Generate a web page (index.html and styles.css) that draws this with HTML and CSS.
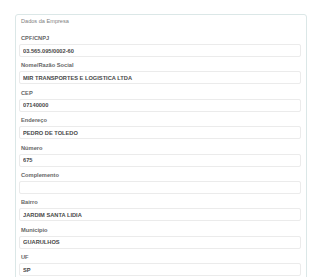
FILE: index.html
```html
<!DOCTYPE html>
<html lang="pt-BR">
<head>
<meta charset="utf-8">
<title>Dados da Empresa</title>
<link rel="stylesheet" href="styles.css">
</head>
<body>
<div class="page">
  <section class="card">
    <div class="card-title">Dados da Empresa</div>
    <div class="group"><label class="lbl">CPF/CNPJ</label><input class="field" value="03.565.095/0002-60" readonly></div>
    <div class="group"><label class="lbl">Nome/Razão Social</label><input class="field" value="MIR TRANSPORTES E LOGISTICA LTDA" readonly></div>
    <div class="group"><label class="lbl">CEP</label><input class="field" value="07140000" readonly></div>
    <div class="group"><label class="lbl">Endereço</label><input class="field" value="PEDRO DE TOLEDO" readonly></div>
    <div class="group"><label class="lbl">Número</label><input class="field" value="675" readonly></div>
    <div class="group"><label class="lbl">Complemento</label><input class="field" value="" readonly></div>
    <div class="group"><label class="lbl">Bairro</label><input class="field" value="JARDIM SANTA LIDIA" readonly></div>
    <div class="group"><label class="lbl">Município</label><input class="field" value="GUARULHOS" readonly></div>
    <div class="group"><label class="lbl">UF</label><input class="field" value="SP" readonly></div>
  </section>
</div>
</body>
</html>
```
FILE: styles.css
```css
html, body {
  margin: 0;
  padding: 0;
  background: #ffffff;
  font-family: "Liberation Sans", Arial, sans-serif;
}
.page {
  padding: 14px 13px 0 15px;
}
.card {
  border: 1px solid #dbe7e7;
  border-radius: 3px;
  padding: 2px 5px 10px 3px;
  background: #fff;
}
.card-title {
  font-size: 5.6px;
  line-height: 8px;
  color: #808080;
  padding-left: 2px;
  margin-bottom: 9px;
}
.group {
  display: flex;
  flex-direction: column;
  margin-bottom: 4.4px;
}
.lbl {
  font-size: 5.7px;
  line-height: 8px;
  font-weight: 700;
  color: #666;
  padding-left: 2px;
  margin-bottom: 2px;
}
.field {
  box-sizing: border-box;
  height: 13px;
  width: 100%;
  margin: 0;
  border: 1px solid #ebebeb;
  border-radius: 2px;
  padding: 0 3px;
  font-family: "Liberation Sans", Arial, sans-serif;
  font-size: 5.7px;
  font-weight: 700;
  color: #484848;
  background: #fff;
  outline: none;
}
```
